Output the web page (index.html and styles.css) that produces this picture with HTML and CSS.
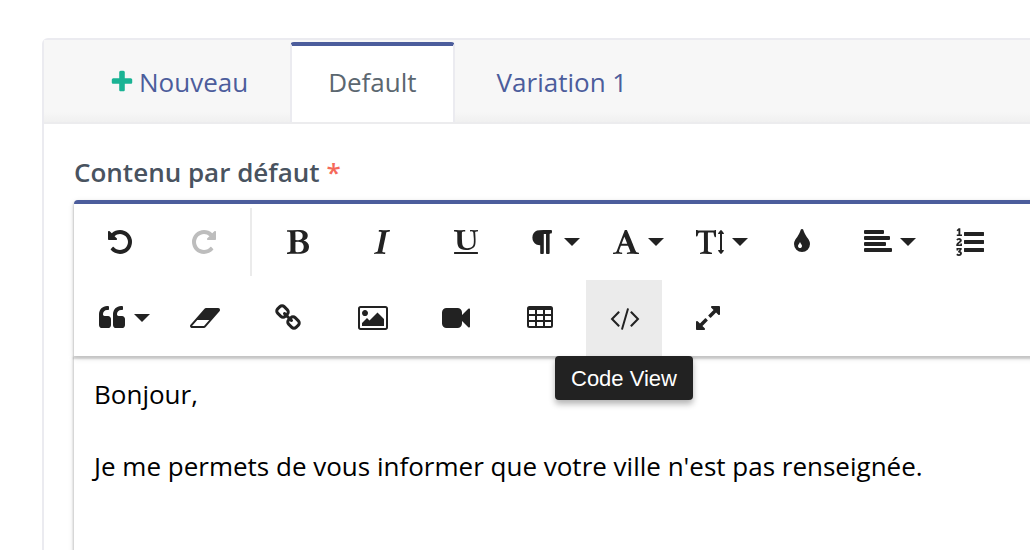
FILE: index.html
```html
<!DOCTYPE html>
<html lang="fr">
<head>
    <meta charset="UTF-8">
    <meta name="viewport" content="width=device-width, initial-scale=1.0">
    <title>Contenu</title>
    <link rel="stylesheet" href="styles.css">
</head>
<body>
    <div class="panel">
        <nav class="tabs">
            <a class="tab" href="#new"><svg class="plus" viewBox="0 0 1792 1792"><path d="M1600 736v192q0 40-28 68t-68 28h-416v416q0 40-28 68t-68 28h-192q-40 0-68-28t-28-68v-416h-416q-40 0-68-28t-28-68v-192q0-40 28-68t68-28h416v-416q0-40 28-68t68-28h192q40 0 68 28t28 68v416h416q40 0 68 28t28 68z"/></svg>Nouveau</a>
            <a class="tab active" href="#default">Default</a>
            <a class="tab" href="#variation-1">Variation 1</a>
        </nav>

        <div class="panel-body">
            <label class="field-label" id="contentLabel" for="content">Contenu par défaut <span class="required">*</span></label>

            <div class="editor">
                <div class="toolbar" role="toolbar">
                    <button type="button" class="btn" aria-label="Undo"><svg class="icon" viewBox="0 0 1792 1792"><path d="M1664 896q0 156-61 298t-164 245-245 164-298 61q-172 0-327-72.5t-264-204.5q-7-10-6.5-22.5t8.5-20.5l137-138q10-9 25-9 16 2 23 12 73 95 179 147t225 52q104 0 198.5-40.5t163.5-109.5 109.5-163.5 40.5-198.5-40.5-198.5-109.5-163.5-163.5-109.5-198.5-40.5q-98 0-188 35.5t-160 101.5l137 138q31 30 14 69-17 40-59 40h-448q-26 0-45-19t-19-45v-448q0-42 40-59 39-17 69 14l130 129q107-101 244.5-156.5t284.5-55.5q156 0 298 61t245 164 164 245 61 298z"/></svg></button>
                    <button type="button" class="btn" aria-label="Redo" disabled><svg class="icon" viewBox="0 0 1792 1792"><path d="M1664 256v448q0 26-19 45t-45 19h-448q-42 0-59-40-17-39 14-69l138-138q-148-137-349-137-104 0-198.5 40.5t-163.5 109.5-109.5 163.5-40.5 198.5 40.5 198.5 109.5 163.5 163.5 109.5 198.5 40.5q119 0 225-52t179-147q7-10 23-12 15 0 25 9l137 138q9 8 9.5 20.5t-7.5 22.5q-109 132-264 204.5t-327 72.5q-156 0-298-61t-245-164-164-245-61-298 61-298 164-245 245-164 298-61q147 0 284.5 55.5t244.5 156.5l130-129q29-31 70-14 39 17 39 59z"/></svg></button>
                    <div class="separator"></div>
                    <button type="button" class="btn" aria-label="Bold"><svg class="icon" viewBox="0 0 1792 1792"><path d="M747 1521q74 32 140 32 376 0 376-335 0-114-41-180-27-44-61.5-74t-67.5-46.5-80.5-25-84-10.5-94.5-2q-73 0-101 10 0 53-.5 159t-.5 158q0 8-1 67.5t-.5 96.5 4.5 83.5 12 66.5zm-14-746q42 7 109 7 82 0 143-13t110-44.5 74.5-89.5 25.5-142q0-70-29-122.5t-79-82-108-43.5-124-14q-50 0-130 13 0 50 4 151t4 152q0 27-.5 80t-.5 79q0 46 1 69zm-541 889l2-94q15-4 85-16t106-27q7-12 12.5-27t8.5-33.5 5.5-32.5 3-37.5.5-34v-65.5q0-982-22-1025-4-8-22-14.5t-44.5-11-49.5-7-48.5-4.5-30.5-3l-4-83q98-2 340-11.5t373-9.5q23 0 68 .5t68 .5q70 0 136.5 13t128.5 42 108 71 74 104.5 28 137.5q0 52-16.5 95.5t-39 72-64.5 57.5-73 45-84 40q154 35 256.5 134t102.5 248q0 100-35 179.5t-93.5 130.5-138 85.5-163.5 48.5-176 14q-44 0-132-3t-132-3q-106 0-307 11t-231 12z"/></svg></button>
                    <button type="button" class="btn" aria-label="Italic"><svg class="icon" viewBox="0 0 1792 1792"><path d="M384 1662l17-85q22-7 61.5-16.5t72-19 59.5-23.5q28-35 41-101 1-7 62-289t114-543.5 52-296.5v-25q-24-13-54.5-18.5t-69.5-8-58-5.5l19-103q33 2 120 6.5t149.5 7 120.5 2.5q48 0 98.5-2.5t121-7 98.5-6.5q-5 39-19 89-30 10-101.5 28.5t-108.5 33.5q-8 19-14 42.5t-9 40-7.5 45.5-6.5 42q-27 148-87.5 419.5t-77.5 355.5q-2 9-13 58t-20 90-16 83.5-6 57.5l1 18q17 4 185 31-3 44-16 99-11 0-32.5 1.5t-32.5 1.5q-29 0-87-10t-86-10q-138-2-206-2-51 0-143 9t-121 11z"/></svg></button>
                    <button type="button" class="btn" aria-label="Underline"><svg class="icon" viewBox="0 0 1792 1792"><path d="M176 223q-37-2-45-4l-3-88q13-1 40-1 60 0 112 4 132 7 166 7 86 0 168-3 116-4 146-5 56 0 86-2l-1 14 2 64v9q-60 9-124 9-60 0-79 25-13 14-13 132 0 13 .5 32.5t.5 25.5l1 229 14 280q6 124 51 202 35 59 96 92 88 47 177 47 104 0 191-28 56-18 99-51 48-36 65-64 36-56 53-114 21-73 21-229 0-79-3.5-128t-11-122.5-13.5-159.5l-4-59q-5-67-24-88-34-35-77-34l-100 2-14-3 2-86h84l205 10q76 3 196-10l18 2q6 38 6 51 0 7-4 31-45 12-84 13-73 11-79 17-15 15-15 41 0 7 1.5 27t1.5 31q8 19 22 396 6 195-15 304-15 76-41 122-38 65-112 123-75 57-182 89-109 33-255 33-167 0-284-46-119-47-179-122-61-76-83-195-16-80-16-237v-333q0-188-17-213-25-36-147-39zm1488 1409v-64q0-14-9-23t-23-9h-1472q-14 0-23 9t-9 23v64q0 14 9 23t23 9h1472q14 0 23-9t9-23z"/></svg></button>
                    <button type="button" class="btn dropdown" aria-label="Paragraph Format" aria-haspopup="true"><svg class="icon" viewBox="0 0 1792 1792"><path d="M1534 189v73q0 29-18.5 61t-42.5 32q-50 0-54 1-26 6-32 31-3 11-3 64v1152q0 25-18 43t-43 18h-108q-25 0-43-18t-18-43v-1218h-143v1218q0 25-17.5 43t-43.5 18h-108q-26 0-43.5-18t-17.5-43v-496q-147-12-245-59-126-58-192-179-64-117-64-259 0-166 88-286 88-118 209-159 111-37 417-37h479q25 0 43 18t18 43z"/></svg></button>
                    <button type="button" class="btn dropdown" aria-label="Font Family" aria-haspopup="true"><svg class="icon" viewBox="-64 0 1792 1792"><path d="M725 559l-170 450q33 0 136.5 2t160.5 2q19 0 57-2-87-253-184-452zm-725 1105l2-79q23-7 56-12.5t57-10.5 49.5-14.5 44.5-29 31-50.5l237-616 280-724h128q8 14 11 21l205 480q33 78 106 257.5t114 274.5q15 34 58 144.5t72 168.5q20 45 35 57 19 15 88 29.5t84 20.5q6 38 6 57 0 4-.5 13t-.5 13q-63 0-190-8t-191-8q-76 0-215 7t-178 8q0-43 4-78l131-28q1 0 12.5-2.5t15.5-3.5 14.5-4.5 15-6.5 11-8 9-11 2.5-14q0-16-31-96.5t-72-177.5-42-100l-450-2q-26 58-76.5 195.5t-50.5 162.5q0 22 14 37.5t43.5 24.5 48.5 13.5 57 8.5 41 4q1 19 1 58 0 9-2 27-58 0-174.5-10t-174.5-10q-8 0-26.5 4t-21.5 4q-80 14-188 14z"/></svg></button>
                    <button type="button" class="btn dropdown" aria-label="Font Size" aria-haspopup="true"><svg class="icon" viewBox="0 0 1792 1792"><path d="M1744 1408q33 0 42 18.5t-11 44.5l-126 162q-20 26-49 26t-49-26l-126-162q-20-26-11-44.5t42-18.5h80v-1024h-80q-33 0-42-18.5t11-44.5l126-162q20-26 49-26t49 26l126 162q20 26 11 44.5t-42 18.5h-80v1024h80zm-1663-1279l54 27q12 5 211 5 44 0 132-2t132-2q36 0 107.5.5t107.5.5h293q6 0 21 .5t20.5 0 16-3 17.5-9 15-17.5l42-1q4 0 14 .5t14 .5q2 112 2 336 0 80-5 109-39 14-68 18-25-44-54-128-3-9-11-48t-14.5-73.5-7.5-35.5q-6-8-12-12.5t-15.5-6-13-2.5-18-.5-16.5.5q-17 0-66.5-.5t-74.5-.5-64 2-71 6q-9 81-8 136 0 94 2 388t2 455q0 16-2.5 71.5t0 91.5 12.5 69q40 21 124 42.5t120 37.5q5 40 5 50 0 14-3 29l-34 1q-76 2-218-8t-207-10q-50 0-151 9t-152 9q-3-51-3-52v-9q17-27 61.5-43t98.5-29 78-27q19-42 19-383 0-101-3-303t-3-303v-117q0-2 .5-15.5t.5-25-1-25.5-3-24-5-14q-11-12-162-12-33 0-93 12t-80 26q-19 13-34 72.5t-31.5 111-42.5 53.5q-42-26-56-44v-383z"/></svg></button>
                    <button type="button" class="btn" aria-label="Colors"><svg class="icon" viewBox="0 0 1792 1792"><path d="M896 1152q0-36-20-69-1-1-15.5-22.5t-25.5-38-25-44-21-50.5q-4-16-21-16t-21 16q-7 23-21 50.5t-25 44-25.5 38-15.5 22.5q-20 33-20 69 0 53 37.5 90.5t90.5 37.5 90.5-37.5 37.5-90.5zm512-128q0 212-150 362t-362 150-362-150-150-362q0-145 81-275 6-9 62.5-90.5t101-151 99.5-178 83-201.5q9-30 34-47t51-17 51.5 17 33.5 47q28 93 83 201.5t99.5 178 101 151 62.5 90.5q81 127 81 275z"/></svg></button>
                    <button type="button" class="btn dropdown" aria-label="Align" aria-haspopup="true"><svg class="icon" viewBox="0 0 28 28"><rect x="0" y="2" width="20" height="4" rx="1"/><rect x="0" y="8" width="26" height="4" rx="1"/><rect x="0" y="14" width="22" height="4" rx="1"/><rect x="0" y="20" width="28" height="4" rx="1"/></svg></button>
                    <button type="button" class="btn" aria-label="Ordered List"><svg class="icon" viewBox="0 0 1792 1792"><path d="M381 1620q0 80-54.5 126t-135.5 46q-106 0-172-66l57-88q49 45 106 45 29 0 50.5-14.5t21.5-42.5q0-64-105-56l-26-56q8-10 32.5-43.5t42.5-54 37-38.5v-1q-16 0-48.5 1t-48.5 1v53h-106v-152h333v88l-95 115q51 12 81 49t30 88zm2-627v159h-362q-6-36-6-54 0-51 23.5-93t56.5-68 66-47.5 56.5-43.5 23.5-45q0-25-14.5-38.5t-39.5-13.5q-46 0-81 58l-85-59q24-51 71.5-79.5t105.5-28.5q73 0 123 41.5t50 112.5q0 50-34 91.5t-75 64.5-75.5 50.5-35.5 52.5h127v-60h105zm1409 319v192q0 13-9.5 22.5t-22.5 9.5h-1216q-13 0-22.5-9.5t-9.5-22.5v-192q0-14 9-23t23-9h1216q13 0 22.5 9.5t9.5 22.5zm-1408-899v99h-335v-99h107q0-41 .5-122t.5-121v-12h-2q-8 17-50 54l-71-76 136-127h106v404h108zm1408 387v192q0 13-9.5 22.5t-22.5 9.5h-1216q-13 0-22.5-9.5t-9.5-22.5v-192q0-14 9-23t23-9h1216q13 0 22.5 9.5t9.5 22.5zm0-512v192q0 13-9.5 22.5t-22.5 9.5h-1216q-13 0-22.5-9.5t-9.5-22.5v-192q0-13 9.5-22.5t22.5-9.5h1216q13 0 22.5 9.5t9.5 22.5z"/></svg></button>
                    <button type="button" class="btn dropdown" aria-label="Quote" aria-haspopup="true"><svg class="icon" viewBox="0 0 1792 1792"><path d="M832 960v384q0 80-56 136t-136 56h-384q-80 0-136-56t-56-136v-704q0-104 40.5-198.5t109.5-163.5 163.5-109.5 198.5-40.5h64q26 0 45 19t19 45v128q0 26-19 45t-45 19h-64q-106 0-181 75t-75 181v32q0 40 28 68t68 28h224q80 0 136 56t56 136zm896 0v384q0 80-56 136t-136 56h-384q-80 0-136-56t-56-136v-704q0-104 40.5-198.5t109.5-163.5 163.5-109.5 198.5-40.5h64q26 0 45 19t19 45v128q0 26-19 45t-45 19h-64q-106 0-181 75t-75 181v32q0 40 28 68t68 28h224q80 0 136 56t56 136z"/></svg></button>
                    <button type="button" class="btn" aria-label="Clear Formatting"><svg class="icon" viewBox="-64 0 1792 1792"><path d="M832 1408l336-384h-768l-336 384h768zm1013-1077q15 34 9.5 71.5t-30.5 65.5l-896 1024q-38 44-96 44h-768q-38 0-69.5-20.5t-47.5-54.5q-15-34-9.5-71.5t30.5-65.5l896-1024q38-44 96-44h768q38 0 69.5 20.5t47.5 54.5z"/></svg></button>
                    <button type="button" class="btn" aria-label="Insert Link"><svg class="icon" viewBox="0 0 1792 1792"><path d="M1520 1216q0-40-28-68l-208-208q-28-28-68-28-42 0-72 32 3 3 19 18.5t21.5 21.5 15 19 13 25.5 3.5 27.5q0 40-28 68t-68 28q-15 0-27.5-3.5t-25.5-13-19-15-21.5-21.5-18.5-19q-33 31-33 73 0 40 28 68l206 207q27 27 68 27 40 0 68-26l147-146q28-28 28-67zm-703-705q0-40-28-68l-206-207q-28-28-68-28-39 0-68 27l-147 146q-28 28-28 67 0 40 28 68l208 208q27 27 68 27 42 0 72-31-3-3-19-18.5t-21.5-21.5-15-19-13-25.5-3.5-27.5q0-40 28-68t68-28q15 0 27.5 3.5t25.5 13 19 15 21.5 21.5 18.5 19q33-31 33-73zm895 705q0 120-85 203l-147 146q-83 83-203 83-121 0-204-85l-206-207q-83-83-83-203 0-123 88-209l-88-88q-86 88-208 88-120 0-204-84l-208-208q-84-84-84-204t85-203l147-146q83-83 203-83 121 0 204 85l206 207q83 83 83 203 0 123-88 209l88 88q86-88 208-88 120 0 204 84l208 208q84 84 84 204z"/></svg></button>
                    <button type="button" class="btn" aria-label="Insert Image"><svg class="icon" viewBox="-64 0 1792 1792"><path d="M576 576q0 80-56 136t-136 56-136-56-56-136 56-136 136-56 136 56 56 136zm1024 384v448h-1408v-192l320-320 160 160 512-512zm96-704h-1600q-13 0-22.5 9.5t-9.5 22.5v1216q0 13 9.5 22.5t22.5 9.5h1600q13 0 22.5-9.5t9.5-22.5v-1216q0-13-9.5-22.5t-22.5-9.5zm160 32v1216q0 66-47 113t-113 47h-1600q-66 0-113-47t-47-113v-1216q0-66 47-113t113-47h1600q66 0 113 47t47 113z"/></svg></button>
                    <button type="button" class="btn" aria-label="Insert Video"><svg class="icon" viewBox="0 0 1792 1792"><path d="M1792 352v1088q0 42-39 59-13 5-25 5-27 0-45-19l-403-403v166q0 119-84.5 203.5t-203.5 84.5h-704q-119 0-203.5-84.5t-84.5-203.5v-704q0-119 84.5-203.5t203.5-84.5h704q119 0 203.5 84.5t84.5 203.5v165l403-402q18-19 45-19 12 0 25 5 39 17 39 59z"/></svg></button>
                    <button type="button" class="btn" aria-label="Insert Table"><svg class="icon" viewBox="0 0 28 28"><path fill-rule="evenodd" d="M3.500 2h21a2.500 2.500 0 0 1 2.500 2.500v17a2.500 2.500 0 0 1-2.500 2.500h-21a2.500 2.500 0 0 1-2.500-2.500v-17a2.500 2.500 0 0 1 2.500-2.500zM3 6v4h6v-4zM11 6v4h6v-4zM19 6v4h6v-4zM3 12v4h6v-4zM11 12v4h6v-4zM19 12v4h6v-4zM3 18v4h6v-4zM11 18v4h6v-4zM19 18v4h6v-4z"/></svg></button>
                    <div class="tooltip-wrap">
                        <button type="button" class="btn hover" aria-describedby="codeTip" aria-label="Code View"><svg class="icon" viewBox="-64 0 1792 1792"><path d="M553 1399l-50 50q-10 10-23 10t-23-10l-466-466q-10-10-10-23t10-23l466-466q10-10 23-10t23 10l50 50q10 10 10 23t-10 23l-393 393 393 393q10 10 10 23t-10 23zm591-1067l-373 1291q-4 13-15.5 19.5t-23.5 2.5l-62-17q-13-4-19.5-15.5t-2.5-24.5l373-1291q4-13 15.5-19.5t23.5-2.5l62 17q13 4 19.5 15.5t2.5 24.5zm657 651l-466 466q-10 10-23 10t-23-10l-50-50q-10-10-10-23t10-23l393-393-393-393q-10-10-10-23t10-23l50-50q10-10 23-10t23 10l466 466q10 10 10 23t-10 23z"/></svg></button>
                        <div class="tooltip" id="codeTip" role="tooltip">Code View</div>
                    </div>
                    <button type="button" class="btn" aria-label="Fullscreen"><svg class="icon" viewBox="0 0 1792 1792"><path d="M883 1056q0 13-10 23l-332 332 144 144q19 19 19 45t-19 45-45 19h-448q-26 0-45-19t-19-45v-448q0-26 19-45t45-19 45 19l144 144 332-332q10-10 23-10t23 10l114 114q10 10 10 23zm781-864v448q0 26-19 45t-45 19-45-19l-144-144-332 332q-10 10-23 10t-23-10l-114-114q-10-10-10-23t10-23l332-332-144-144q-19-19-19-45t19-45 45-19h448q26 0 45 19t19 45z"/></svg></button>
                </div>

                <div class="content" id="content" contenteditable="true" spellcheck="false" role="textbox" aria-multiline="true" aria-labelledby="contentLabel">
                    <p>Bonjour,</p>
                    <p><br></p>
                    <p>Je me permets de vous informer que votre ville n'est pas renseignée.</p>
                </div>
            </div>
        </div>
    </div>
</body>
</html>
```
FILE: styles.css
```css
* {
    box-sizing: border-box;
}
body {
    margin: 0;
    overflow: hidden;
    background-color: #fff;
    font-family: "Open Sans", "Noto Sans", sans-serif;
    font-size: 26px;
    line-height: 36px;
}
/* the panel runs past the right edge of the window */
.panel {
    margin: 38px -60px 0 42px;
    border: 2px solid #ebebf0;
    border-radius: 6px;
}
.tabs {
    display: flex;
    gap: 4px;
    padding: 2px 27px 0;
    border-bottom: 2px solid #ececee;
    background: linear-gradient(to top, #f0f0f0, #f7f7f7 10px);
}
.tab {
    display: flex;
    align-items: center;
    gap: 4px;
    height: 80px;
    padding: 0 36px 4px;
    border: 2px solid transparent;
    border-top-width: 4px;
    border-bottom: 0;
    color: #4c5d9c;
    text-decoration: none;
}
.tab.active {
    border-color: #4c5d9c #ebebf0 transparent;
    border-radius: 4px 4px 0 0;
    background-color: #fff;
    color: #5b6770;
}
.plus {
    width: 26px;
    height: 26px;
    fill: #1ab394;
}
.panel-body {
    padding: 30px;
}
.field-label {
    display: block;
    margin-bottom: 10px;
    color: #49535f;
    font-weight: 600;
}
.required {
    color: #f5695a;
}
.editor {
    border-radius: 4px;
}
.toolbar {
    position: relative;
    display: flex;
    flex-wrap: wrap;
    gap: 0 8px;
    padding: 0 8px;
    border-top: 4px solid #4c5d9c;
    border-radius: 4px 4px 0 0;
    background-color: #fff;
    box-shadow: 0 2px 6px rgba(0, 0, 0, 0.12), 0 2px 2px 1px rgba(0, 0, 0, 0.16);
}
.btn {
    display: flex;
    align-items: center;
    justify-content: center;
    width: 76px;
    height: 76px;
    padding: 0;
    border: none;
    background: transparent;
    color: #222;
    cursor: pointer;
}
.btn.hover, .btn:hover {
    background-color: #ebebeb;
}
.btn:disabled {
    background: transparent;
    color: #bdbdbd;
    cursor: default;
}
.icon {
    width: 28px;
    height: 28px;
    fill: currentColor;
    overflow: visible;
}
.dropdown {
    justify-content: flex-start;
    gap: 8px;
    padding-left: 16px;
}
.dropdown::after {
    content: "";
    border: 8px solid transparent;
    border-top-color: #222;
    border-bottom: 0;
}
.separator {
    width: 2px;
    height: 68px;
    margin-top: 4px;
    background-color: #ebebeb;
}
.tooltip-wrap {
    position: relative;
}
.tooltip {
    position: absolute;
    top: 100%;
    left: 50%;
    transform: translateX(-50%);
    padding: 5px 16px 3px;
    border-radius: 4px;
    background-color: #222;
    box-shadow: 0 4px 6px rgba(0, 0, 0, 0.3);
    color: #fff;
    font-family: "Liberation Sans", Arial, sans-serif;
    font-size: 22px;
    white-space: nowrap;
}
.content {
    min-height: 260px;
    padding: 20px;
    box-shadow: 0 2px 6px rgba(0, 0, 0, 0.12), 0 2px 2px 1px rgba(0, 0, 0, 0.16);
    color: #000;
    outline: none;
}
.content p {
    margin: 0;
}
```
